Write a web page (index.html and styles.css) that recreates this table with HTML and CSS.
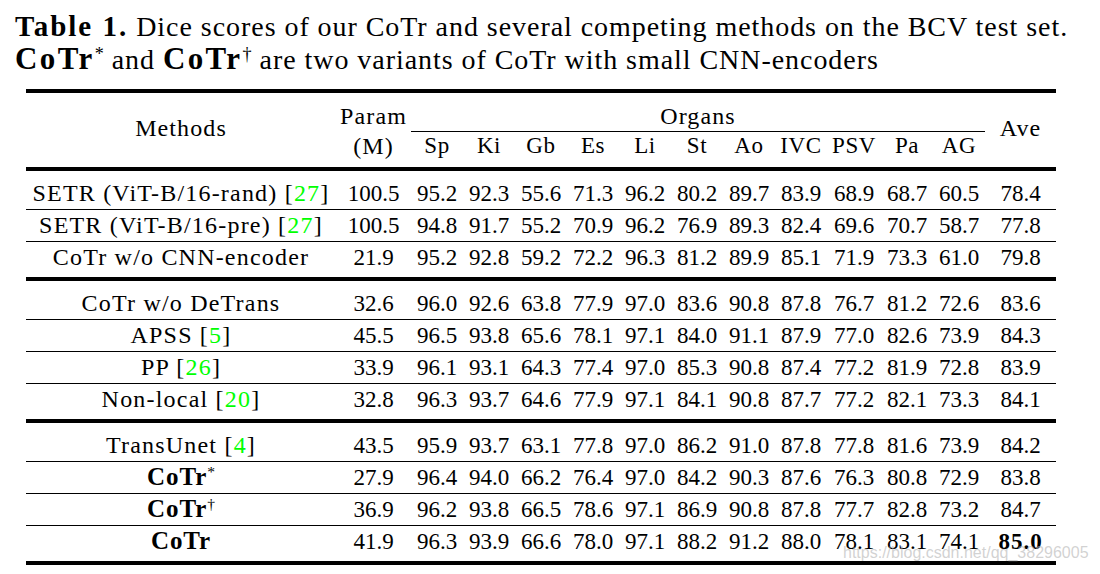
FILE: index.html
```html
<!DOCTYPE html>
<html>
<head>
<meta charset="utf-8">
<link rel="stylesheet" href="styles.css">
</head>
<body>
<div class="page">
  <div class="caption">
    <div class="cap-line"><b class="tbl">Table 1.</b> Dice scores of our CoTr and several competing methods on the BCV test set.</div>
    <div class="cap-line"><b class="name">CoTr</b><sup class="ast">*</sup> and <b class="name">CoTr</b><sup class="dag">&dagger;</sup> are two variants of CoTr with small CNN-encoders</div>
  </div>
  <table class="res">
    <colgroup>
      <col class="c-m"><col class="c-p">
      <col class="c-o"><col class="c-o"><col class="c-o"><col class="c-o"><col class="c-o"><col class="c-o"><col class="c-o"><col class="c-o">
      <col class="c-psv"><col class="c-o"><col class="c-o">
      <col class="c-a">
    </colgroup>
    <thead>
      <tr class="h1">
        <th rowspan="2" class="mid">Methods</th>
        <th class="param">Param</th>
        <th colspan="11" class="organs">Organs</th>
        <th rowspan="2" class="mid">Ave</th>
      </tr>
      <tr class="h2">
        <th class="unit">(M)</th><th>Sp</th><th>Ki</th><th>Gb</th><th>Es</th><th>Li</th><th>St</th><th>Ao</th><th>IVC</th><th>PSV</th><th>Pa</th><th>AG</th>
      </tr>
    </thead>
    <tbody>
      <tr class="first"><td class="m">SETR (ViT-B/16-rand) [<span class="cite">27</span>]</td><td>100.5</td><td>95.2</td><td>92.3</td><td>55.6</td><td>71.3</td><td>96.2</td><td>80.2</td><td>89.7</td><td>83.9</td><td>68.9</td><td>68.7</td><td>60.5</td><td>78.4</td></tr>
      <tr class="rule"><td class="m">SETR (ViT-B/16-pre) [<span class="cite">27</span>]</td><td>100.5</td><td>94.8</td><td>91.7</td><td>55.2</td><td>70.9</td><td>96.2</td><td>76.9</td><td>89.3</td><td>82.4</td><td>69.6</td><td>70.7</td><td>58.7</td><td>77.8</td></tr>
      <tr class="rule last"><td class="m">CoTr w/o CNN-encoder</td><td>21.9</td><td>95.2</td><td>92.8</td><td>59.2</td><td>72.2</td><td>96.3</td><td>81.2</td><td>89.9</td><td>85.1</td><td>71.9</td><td>73.3</td><td>61.0</td><td>79.8</td></tr>

      <tr class="first"><td class="m">CoTr w/o DeTrans</td><td>32.6</td><td>96.0</td><td>92.6</td><td>63.8</td><td>77.9</td><td>97.0</td><td>83.6</td><td>90.8</td><td>87.8</td><td>76.7</td><td>81.2</td><td>72.6</td><td>83.6</td></tr>
      <tr class="rule"><td class="m">APSS [<span class="cite">5</span>]</td><td>45.5</td><td>96.5</td><td>93.8</td><td>65.6</td><td>78.1</td><td>97.1</td><td>84.0</td><td>91.1</td><td>87.9</td><td>77.0</td><td>82.6</td><td>73.9</td><td>84.3</td></tr>
      <tr class="rule"><td class="m">PP [<span class="cite">26</span>]</td><td>33.9</td><td>96.1</td><td>93.1</td><td>64.3</td><td>77.4</td><td>97.0</td><td>85.3</td><td>90.8</td><td>87.4</td><td>77.2</td><td>81.9</td><td>72.8</td><td>83.9</td></tr>
      <tr class="rule last"><td class="m">Non-local [<span class="cite">20</span>]</td><td>32.8</td><td>96.3</td><td>93.7</td><td>64.6</td><td>77.9</td><td>97.1</td><td>84.1</td><td>90.8</td><td>87.7</td><td>77.2</td><td>82.1</td><td>73.3</td><td>84.1</td></tr>

      <tr class="first"><td class="m">TransUnet [<span class="cite">4</span>]</td><td>43.5</td><td>95.9</td><td>93.7</td><td>63.1</td><td>77.8</td><td>97.0</td><td>86.2</td><td>91.0</td><td>87.8</td><td>77.8</td><td>81.6</td><td>73.9</td><td>84.2</td></tr>
      <tr class="rule"><td class="m"><b class="name">CoTr</b><sup class="ast">*</sup></td><td>27.9</td><td>96.4</td><td>94.0</td><td>66.2</td><td>76.4</td><td>97.0</td><td>84.2</td><td>90.3</td><td>87.6</td><td>76.3</td><td>80.8</td><td>72.9</td><td>83.8</td></tr>
      <tr class="rule"><td class="m"><b class="name">CoTr</b><sup class="dag">&dagger;</sup></td><td>36.9</td><td>96.2</td><td>93.8</td><td>66.5</td><td>78.6</td><td>97.1</td><td>86.9</td><td>90.8</td><td>87.8</td><td>77.7</td><td>82.8</td><td>73.2</td><td>84.7</td></tr>
      <tr class="rule last end"><td class="m"><b class="name">CoTr</b></td><td>41.9</td><td>96.3</td><td>93.9</td><td>66.6</td><td>78.0</td><td>97.1</td><td>88.2</td><td>91.2</td><td>88.0</td><td>78.1</td><td>83.1</td><td>74.1</td><td><b class="best">85.0</b></td></tr>
    </tbody>
  </table>
  <div class="watermark">https://blog.csdn.net/qq_38296005</div>
</div>
</body>
</html>
```
FILE: styles.css
```css
html, body {
  margin: 0;
  padding: 0;
  background: #ffffff;
}
.page {
  position: relative;
  width: 1100px;
  height: 574px;
  overflow: hidden;
  font-family: "Liberation Serif", "Times New Roman", serif;
  color: #000;
}
.caption {
  padding: 10px 0 0 15px;
  font-size: 28px;
  line-height: 33px;
  letter-spacing: 0.95px;
}
.cap-line {
  white-space: nowrap;
  height: 33px;
}
.caption b {
  font-weight: bold;
  line-height: 1;
}
.caption b.tbl {
  font-size: 29px;
  letter-spacing: 2px;
}
.caption b.name {
  font-size: 31px;
  letter-spacing: 2.4px;
}
sup {
  line-height: 0;
  font-size: 0.65em;
  vertical-align: 0.5em;
  letter-spacing: 0;
}
.caption sup {
  font-weight: normal;
}
.res {
  margin: 13px 0 0 26px;
  width: 1030px;
  table-layout: fixed;
  border-collapse: separate;
  border-spacing: 0;
  font-size: 23px;
}
.c-m { width: 310px; }
.c-p { width: 75px; }
.c-o { width: 52px; }
.c-psv { width: 54px; }
.c-a { width: 71px; }
.res th, .res td {
  padding: 0;
  text-align: center;
  white-space: nowrap;
  font-weight: normal;
}
.res th {
  letter-spacing: 0.6px;
}
.h1 th {
  border-top: 4px solid #000;
  padding-top: 8px;
  padding-bottom: 1px;
  line-height: 30px;
  vertical-align: top;
  font-size: 24px;
  letter-spacing: 1.1px;
}
.h1 th.organs {
  padding-bottom: 0;
  border-bottom: 1px solid #000;
}
.h1 th.mid {
  vertical-align: middle;
  padding-top: 2px;
  padding-bottom: 6px;
}
.h2 th {
  line-height: 28px;
  padding-bottom: 7px;
  vertical-align: top;
}
.h2 th.unit {
  font-size: 24px;
  letter-spacing: 1px;
}
.res td {
  line-height: 31px;
  height: 31px;
  vertical-align: top;
}
.res td.m {
  font-size: 24px;
  letter-spacing: 1.2px;
}
.res td.m b.name {
  font-size: 25px;
  letter-spacing: 0.9px;
  line-height: 1;
}
.res tr.first td {
  border-top: 4px solid #000;
  padding-top: 7px;
}
.res tr.rule td {
  border-top: 1px solid #000;
}
.res tr.last td {
  padding-bottom: 4px;
}
.res tr.end td {
  border-bottom: 4px solid #000;
}
.cite {
  color: #00ff00;
}
.res td b {
  font-weight: bold;
}
.res td b.best {
  letter-spacing: 1px;
}
.watermark {
  position: absolute;
  left: 843px;
  top: 543px;
  font-family: "Liberation Sans", Arial, sans-serif;
  font-size: 16px;
  line-height: 20px;
  color: rgba(180, 180, 180, 0.6);
  white-space: nowrap;
}
```
